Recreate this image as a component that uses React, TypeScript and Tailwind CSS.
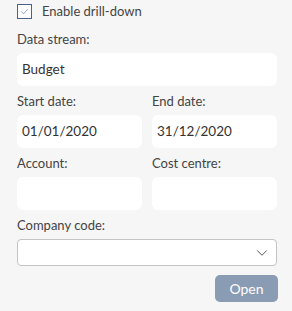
import { ChevronDown } from "lucide-react";

type FieldProps = {
  label: string;
  value?: string;
};

function Field({ label, value }: FieldProps) {
  return (
    <div className="flex min-w-0 flex-1 flex-col">
      <label className="h-[20px] text-[13px] leading-[20px] text-[#444]">{label}</label>
      <div className="mt-[4px] flex h-[33px] items-center rounded-[6px] bg-white px-[5px] pb-[1px] text-[13.5px] text-[#333]">
        {value}
      </div>
    </div>
  );
}

export default function App() {
  return (
    <div
      className="flex h-[311px] w-[292px] flex-col bg-[#f6f6f6] pl-[17px] pr-[15px] pt-[4px]"
      style={{ fontFamily: "Lato, 'Noto Sans', sans-serif" }}
    >
      <label className="flex h-[15px] items-center gap-[10px] text-[13px] text-[#444]">
        <span className="flex h-[15px] w-[15px] items-center justify-center border-[1.5px] border-[#4d6385] bg-white">
          <svg viewBox="0 0 12 12" className="h-[11px] w-[11px]" fill="none" stroke="#7f9cc8" strokeWidth="1">
            <path d="M2.5 6.2 L5 8.5 L9.5 3.5" />
          </svg>
        </span>
        Enable drill-down
      </label>

      <div className="mt-[10px]">
        <Field label="Data stream:" value="Budget" />
      </div>

      <div className="mt-[5px] flex gap-[10px]">
        <Field label="Start date:" value="01/01/2020" />
        <Field label="End date:" value="31/12/2020" />
      </div>

      <div className="mt-[5px] flex gap-[10px]">
        <Field label="Account:" />
        <Field label="Cost centre:" />
      </div>

      <div className="mt-[5px] flex flex-col">
        <label className="h-[20px] text-[13px] leading-[20px] text-[#444]">Company code:</label>
        <div className="mt-[4px] flex h-[27px] items-center justify-end rounded-[4px] border border-[#c4c4c4] bg-white pr-[5px]">
          <ChevronDown className="h-[18px] w-[18px] text-[#555]" strokeWidth={1.3} />
        </div>
      </div>

      <div className="mt-[9px] flex justify-end">
        <button
          type="button"
          className="mr-[-1px] h-[27px] w-[63px] rounded-[5px] bg-[#8a9bb4] text-[14px] text-white"
        >
          Open
        </button>
      </div>
    </div>
  );
}
